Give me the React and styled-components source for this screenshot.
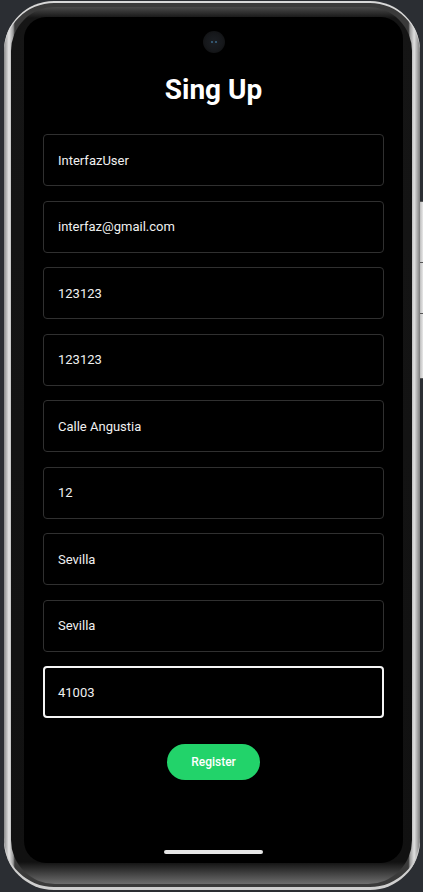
import React from "react";
import styled, { createGlobalStyle } from "styled-components";

const Global = createGlobalStyle`
  html, body { margin: 0; padding: 0; background: #2b2e33; }
  body { font-family: Roboto, "Noto Sans", Arial, sans-serif; }
`;

const Page = styled.div`
  width: 423px;
  height: 892px;
  box-sizing: border-box;
  padding: 1px 3px 2px 4px;
  display: flex;
`;

const Phone = styled.div`
  position: relative;
  flex: 1;
  border-radius: 50px;
  padding: 6px 8px 6px 7px;
  background: linear-gradient(90deg, #8a8a8a 0%, #e4e4e4 1.2%, #9a9a9a 2.2%, #3a3a3a 2.6%, #3a3a3a 97.2%, #9a9a9a 97.6%, #e0e0e0 98.6%, #7a7a7a 100%);
  box-shadow: inset 0 2px 0 #d8d8d8, inset 0 -3px 0 #cfcfcf;
`;

const SideButton = styled.div`
  position: absolute;
  right: -3px;
  top: ${(p) => p.$top}px;
  width: 3px;
  height: ${(p) => p.$h}px;
  background: linear-gradient(90deg, #bdbdbd, #e8e8e8);
  border-top: 1px solid #555;
  border-bottom: 1px solid #555;
`;

const Bezel = styled.div`
  height: 100%;
  box-sizing: border-box;
  border-radius: 44px;
  padding: 10px 9px 21px 13px;
  background: linear-gradient(180deg, #4a4a4a 0px, #151515 11px, #111 calc(100% - 22px), #6e6e6e 100%);
  display: flex;
`;

const Screen = styled.div`
  flex: 1;
  background: #000;
  border-radius: 22px;
  display: flex;
  flex-direction: column;
  align-items: center;
  padding-bottom: 9px;
`;

const Camera = styled.div`
  margin-top: 14px;
  width: 22px;
  height: 22px;
  border-radius: 50%;
  background: radial-gradient(circle, #1c1f24 0%, #16181b 55%, #0c0c0c 100%);
  display: flex;
  align-items: center;
  justify-content: center;
  gap: 2px;
`;

const Lens = styled.span`
  width: 2px;
  height: 2px;
  border-radius: 50%;
  background: #3c6a8a;
`;

const Title = styled.h1`
  margin: 22px 0 0;
  font-size: 28px;
  line-height: 30px;
  font-weight: 700;
  color: #fff;
  font-family: Roboto, sans-serif;
`;

const Form = styled.div`
  margin-top: 29px;
  width: 341px;
  display: flex;
  flex-direction: column;
  gap: 14.5px;
`;

const Field = styled.div`
  height: 52px;
  box-sizing: border-box;
  border-radius: 4px;
  border: ${(p) => (p.$focused ? "2px solid #f5f5f5" : "1px solid #303030")};
  padding-left: ${(p) => (p.$focused ? 13 : 14)}px;
  display: flex;
  align-items: center;
  color: #f0f0f0;
  font-size: 13px;
  font-family: Roboto, sans-serif;
`;

const Register = styled.button`
  margin-top: 26px;
  width: 93px;
  height: 36px;
  border: none;
  border-radius: 18px;
  background: #22d36a;
  color: #fff;
  font-family: Roboto, sans-serif;
  font-size: 12px;
  font-weight: 500;
`;

const HomeBar = styled.div`
  margin-top: auto;
  width: 99px;
  height: 4px;
  border-radius: 2px;
  background: #e6e6e6;
`;

const values = [
  "InterfazUser",
  "interfaz@gmail.com",
  "123123",
  "123123",
  "Calle Angustia",
  "12",
  "Sevilla",
  "Sevilla",
  "41003",
];

export default function App() {
  return (
    <>
      <Global />
      <Page>
        <Phone>
          <SideButton $top={200} $h={61} />
          <SideButton $top={261} $h={52} />
          <SideButton $top={312} $h={64} />
          <Bezel>
            <Screen>
              <Camera>
                <Lens />
                <Lens />
              </Camera>
              <Title>Sing Up</Title>
              <Form>
                {values.map((v, i) => (
                  <Field key={i} $focused={i === values.length - 1}>
                    {v}
                  </Field>
                ))}
              </Form>
              <Register>Register</Register>
              <HomeBar />
            </Screen>
          </Bezel>
        </Phone>
      </Page>
    </>
  );
}
